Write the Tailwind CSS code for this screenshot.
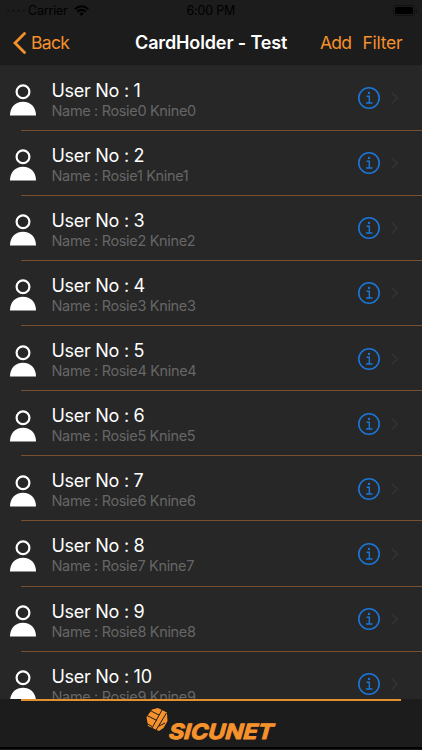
<!DOCTYPE html>
<html lang="en">
<head>
<meta charset="utf-8">
<title>CardHolder - Test</title>
<script src="https://cdn.jsdelivr.net/npm/@tailwindcss/browser@4"></script>
</head>
<body class="bg-[#1c1c1c]">
<svg class="hidden">
  <symbol id="person" viewBox="0 0 26 32"><circle cx="13" cy="7.8" r="6.400" fill="none" stroke="#fff" stroke-width="2.2"/><path d="M0 31.500C0 23.500 5.200 17.800 13 17.800s13 5.700 13 13.700z" fill="#fff"/></symbol>
  <symbol id="info" viewBox="0 0 22 22"><g fill="none" stroke="#1b76d8" stroke-width="1.600"><circle cx="11" cy="11" r="10.200"/><path d="M8.500 9.300h2.800v6.500M8 16h6.500" stroke-width="1.400"/></g><circle cx="11" cy="5.900" r="1.200" fill="#1b76d8"/></symbol>
  <symbol id="chev" viewBox="0 0 8 12"><path d="M1 1l5.500 5L1 11" fill="none" stroke="#343434" stroke-width="1.500"/></symbol>
</svg>
<div class="w-[422px] h-[750px] flex flex-col overflow-hidden font-['Inter',sans-serif] bg-[#1c1c1c]">
  <div class="h-[21px] shrink-0 flex items-center text-[12.500px] leading-[21px] text-black">
    <div class="w-[180px] flex items-center pl-[7px]">
      <div class="flex gap-[2px] w-[21px]"><i class="size-[3px] rounded-full bg-[#151515]"></i><i class="size-[3px] rounded-full bg-[#151515]"></i><i class="size-[3px] rounded-full bg-[#151515]"></i><i class="size-[3px] rounded-full bg-[#151515]"></i></div>
      <span class="tracking-[-0.200px]">Carrier</span>
      <svg class="ml-[6px] w-[15px] h-[11px]" viewBox="0 0 15 11"><g fill="none" stroke="#000" stroke-width="2"><path d="M.8 4.200q6.700-6 13.400 0M3.200 6.700q4.300-3.700 8.600 0"/></g><path d="M5.200 8.500q2.300-1.800 4.600 0L7.500 11z"/></svg>
    </div>
    <div class="flex-1 pl-[6.500px]"><span class="tracking-[-0.200px]">6:00 PM</span></div>
    <div class="flex items-center pr-[5px]"><div class="w-[22px] h-[11px] rounded-[3px] border border-[#111] p-px"><div class="h-full rounded-[2px] bg-black"></div></div><i class="ml-px w-[1.500px] h-[4px] rounded-r bg-[#111]"></i></div>
  </div>
  <div class="h-[44.500px] shrink-0 flex items-center text-[17.500px] leading-[44px] text-[#f5912c] border-b border-[#252525]">
    <svg class="ml-[13px] w-[13px] h-[22px]" viewBox="0 0 13 22"><path d="M11.500 1.500L2 11l9.500 9.500" fill="none" stroke="#f5912c" stroke-width="2.800" stroke-linecap="round"/></svg>
    <div class="ml-[5px] w-[104px] tracking-[-0.700px]">Back</div>
    <div class="w-[185px] text-[18px] text-white font-semibold tracking-[-0.130px] whitespace-nowrap">CardHolder - Test</div>
    <div class="w-[42.500px] tracking-[-0.800px]">Add</div>
    <div class="tracking-[-0.250px]">Filter</div>
  </div>
  <div id="list" class="h-[633.500px] shrink-0 overflow-hidden bg-[#272727]"></div>
  <div class="h-[50px] shrink-0 flex flex-col border-b-2 border-black">
    <div class="ml-[21px] w-[380px] h-[2px] bg-[#e3902f]"></div>
    <svg class="ml-[135px] w-[150px] h-[46px]" viewBox="0 0 150 46">
      <path d="M17 8.500l6-1.500 9 4.500.5 8.500-4 7-4.500 3-11-5-1.500-9z" fill="#f5922c"/>
      <path d="M27.500 8L16.500 28M31.500 12L20.500 30M12 14.500l10 5M16 10l8 4M12 22.500l5 3M24 25l6-3" stroke="#1c1c1c" stroke-width="1" fill="none"/>
      <text transform="translate(33.500 37.500) skewX(-5)" textLength="104.500" lengthAdjust="spacingAndGlyphs" font-family="Inter" font-size="21" font-weight="700" fill="#f5922c" stroke="#f5922c" stroke-width="1" stroke-linejoin="round" font-style="italic">SICUNET</text>
    </svg>
  </div>
</div>
<template id="row">
  <div class="h-[65.125px] flex">
    <svg class="ml-[10px] mt-[18.500px] w-[26px] h-[32px] shrink-0"><use href="#person"/></svg>
    <div class="ml-[15.500px] mt-[13px] w-[306.500px] whitespace-nowrap">
      <div class="text-[18px] leading-[24px] text-white tracking-[-0.280px]" data-no></div>
      <div class="mt-[-1px] text-[14.500px] leading-[18px] text-[#666] tracking-[-0.340px]" data-name></div>
    </div>
    <svg class="mt-[21.500px] w-[22px] h-[22px] shrink-0"><use href="#info"/></svg>
    <svg class="ml-[11px] mt-[26.500px] w-[8px] h-[12px] shrink-0"><use href="#chev"/></svg>
  </div>
  <div class="ml-[21px] -mt-px h-px bg-[#78502f]"></div>
</template>
<script>
const list = document.getElementById('list'), row = document.getElementById('row');
for (let i = 0; i < 10; i++) {
  const r = row.content.cloneNode(true);
  r.querySelector('[data-no]').textContent = `User No : ${i + 1}`;
  r.querySelector('[data-name]').textContent = `Name : Rosie${i} Knine${i}`;
  list.append(r);
}
</script>
</body>
</html>
